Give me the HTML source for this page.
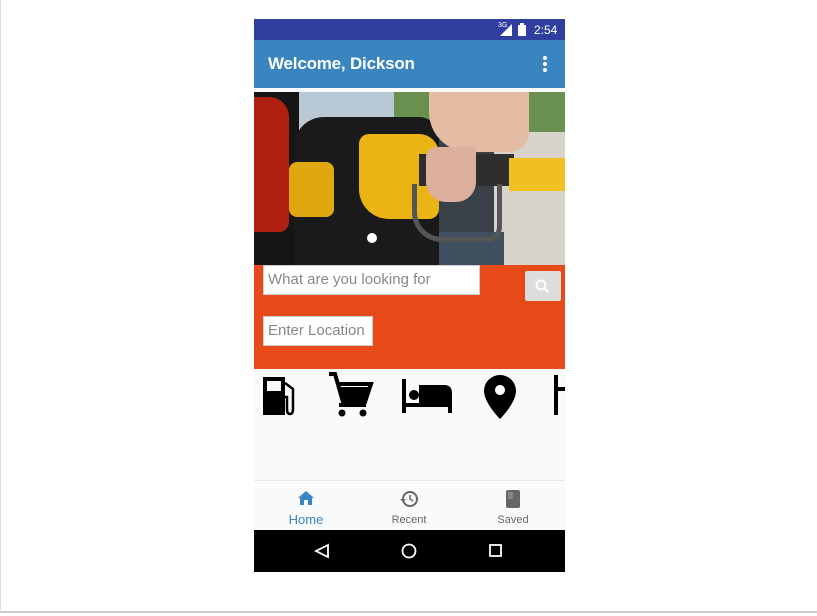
<!DOCTYPE html>
<html><head><style>
body{margin:0;width:817px;height:616px;background:#fff;position:relative;overflow:hidden;font-family:"Liberation Sans",sans-serif}
.frame{position:absolute;left:0;top:0;width:816px;height:611px;border-left:1px solid #ddd;border-bottom:2px solid #ccc}
.ph{position:absolute;left:254px;top:19px;width:311px;height:553px;background:#fafafa;overflow:hidden}
.sb{position:absolute;left:0;top:0;width:311px;height:21px;background:#303f9f;color:#fff;font-size:12px}
.ab{position:absolute;left:0;top:21px;width:311px;height:48px;background:#3a85c0;color:#fff}
.img{position:absolute;left:0;top:73px;width:311px;height:173px;overflow:hidden;background:#3a4048}
.img div{position:absolute}
.or{position:absolute;left:0;top:246px;width:311px;height:104px;background:#e64a19}
.in{position:absolute;background:#fff;border:1px solid #ccc;color:#888;font-size:15px;line-height:28px;padding-left:4px;box-sizing:border-box}
.nav{position:absolute;left:0;top:461px;width:311px;height:50px;border-top:1px solid #e8e8e8;background:#fafafa}
.sys{position:absolute;left:0;top:511px;width:311px;height:42px;background:#000}
.lb{position:absolute;font-size:11px;color:#666;text-align:center;width:80px}
</style></head><body>
<div class="frame"></div>
<div class="ph">
<div class="sb"><span style="position:absolute;left:244px;top:3px;font-size:7px">3G</span>
<svg style="position:absolute;left:246px;top:5px" width="12" height="12"><path d="M0 12L12 0V12Z" fill="#fff"/></svg>
<svg style="position:absolute;left:264px;top:4px" width="8" height="13"><rect x="0" y="2" width="8" height="11" fill="#fff"/><rect x="2" y="0" width="4" height="2" fill="#fff"/></svg>
<span style="position:absolute;left:280px;top:4px">2:54</span></div>
<div class="ab"><span style="position:absolute;left:14px;top:14px;font-size:17px;font-weight:bold;letter-spacing:-0.2px">Welcome, Dickson</span>
<svg style="position:absolute;left:289px;top:16px" width="4" height="16"><circle cx="2" cy="2" r="2" fill="#fff"/><circle cx="2" cy="8" r="2" fill="#fff"/><circle cx="2" cy="14" r="2" fill="#fff"/></svg></div>
<div class="img">
<div style="left:40px;top:0;width:160px;height:40px;background:#b8c8d4"></div>
<div style="left:140px;top:0;width:171px;height:45px;background:#6a9050"></div>
<div style="left:240px;top:40px;width:71px;height:133px;background:#d8d4cc"></div>
<div style="left:130px;top:140px;width:120px;height:33px;background:#405060"></div>
<div style="left:0;top:0;width:45px;height:173px;background:#151515"></div>
<div style="left:0;top:5px;width:35px;height:135px;background:#b02010;border-radius:0 20px 10px 0"></div>
<div style="left:40px;top:25px;width:145px;height:150px;background:#1a1a1a;border-radius:30px 20px 0 0"></div>
<div style="left:35px;top:70px;width:45px;height:55px;background:#e0a810;border-radius:8px"></div>
<div style="left:105px;top:42px;width:80px;height:85px;background:#eab414;border-radius:10px 20px 10px 30px"></div>
<div style="left:165px;top:62px;width:95px;height:32px;background:#2e2e2e"></div>
<div style="left:255px;top:66px;width:56px;height:33px;background:#f0c020"></div>
<div style="left:175px;top:0;width:100px;height:60px;background:#e4bca4;border-radius:0 0 20px 40px"></div>
<div style="left:172px;top:55px;width:50px;height:55px;background:#dcb09a;border-radius:10px 0 20px 20px"></div>
<div style="left:158px;top:92px;width:90px;height:58px;border:5px solid #555;border-top:none;border-radius:0 0 15px 30px;box-sizing:border-box"></div>
<div style="left:113px;top:141px;width:10px;height:10px;background:#fff;border-radius:50%"></div>
</div>
<div class="or">
<div class="in" style="left:9px;top:0;width:217px;height:30px">What are you looking for</div>
<div style="position:absolute;left:271px;top:6px;width:36px;height:30px;background:#ddd;border-radius:2px"><svg width="36" height="30"><circle cx="16" cy="14" r="4.5" stroke="#fff" stroke-width="2" fill="none"/><path d="M19 17L23 21" stroke="#fff" stroke-width="2.5"/></svg></div>
<div class="in" style="left:9px;top:51px;width:110px;height:30px">Enter Location</div>
</div>
<svg style="position:absolute;left:0;top:350px" width="311" height="111">
<path d="M9 8h22v38H9z M13 12v10h14V12z" fill="#000" fill-rule="evenodd"/><path d="M31 14l8 6v20q0 5-3 5t-3-5V28h-2" stroke="#000" stroke-width="2.5" fill="none"/>
<path d="M75 5h6l8 28h22l6-18H84" stroke="#000" stroke-width="4" fill="none"/><path d="M86 18h28l-4 13H90z" fill="#000"/><path d="M85 36h27" stroke="#000" stroke-width="4"/><circle cx="88" cy="44" r="3.5"/><circle cx="109" cy="44" r="3.5"/>
<path d="M150 10v34M150 36h46v8M196 36V24q0-6-6-6h-23v18" stroke="#000" stroke-width="4" fill="none"/><path d="M167 18h29v18h-29z"/><circle cx="160" cy="26" r="5"/>
<path d="M246 6a16 16 0 0 1 16 16c0 12-16 28-16 28s-16-16-16-28a16 16 0 0 1 16-16z M246 16a5 5 0 1 0 0.01 0z" fill-rule="evenodd"/>
<path d="M302 6v40M302 6v14h9" stroke="#000" stroke-width="4" fill="none"/>
</svg>
<div class="nav">
<svg style="position:absolute;left:44px;top:10px" width="16" height="14"><path d="M8 0L0 7h2v7h4V9h4v5h4V7h2z" fill="#3a85c0"/></svg>
<div class="lb" style="left:12px;top:31px;color:#3a85c0;font-size:13px">Home</div>
<svg style="position:absolute;left:146px;top:9px" width="18" height="18"><circle cx="10" cy="9" r="7" stroke="#666" stroke-width="2" fill="none"/><path d="M10 5v4l3 2" stroke="#666" stroke-width="1.5" fill="none"/><path d="M0 9h6l-3 3z" fill="#666"/></svg>
<div class="lb" style="left:115px;top:33px">Recent</div>
<svg style="position:absolute;left:251px;top:9px" width="16" height="18"><rect x="1" y="0" width="14" height="18" rx="2" fill="#666"/><rect x="3" y="2" width="5" height="7" fill="#888"/></svg>
<div class="lb" style="left:219px;top:33px">Saved</div>
</div>
<div class="sys">
<svg width="311" height="42"><path d="M74 15L62 21L74 27Z" stroke="#fff" stroke-width="1.8" fill="none"/><circle cx="155" cy="21" r="6.5" stroke="#fff" stroke-width="1.8" fill="none"/><rect x="236" y="15" width="11" height="11" stroke="#fff" stroke-width="1.8" fill="none"/></svg>
</div>
</div>
</body></html>
